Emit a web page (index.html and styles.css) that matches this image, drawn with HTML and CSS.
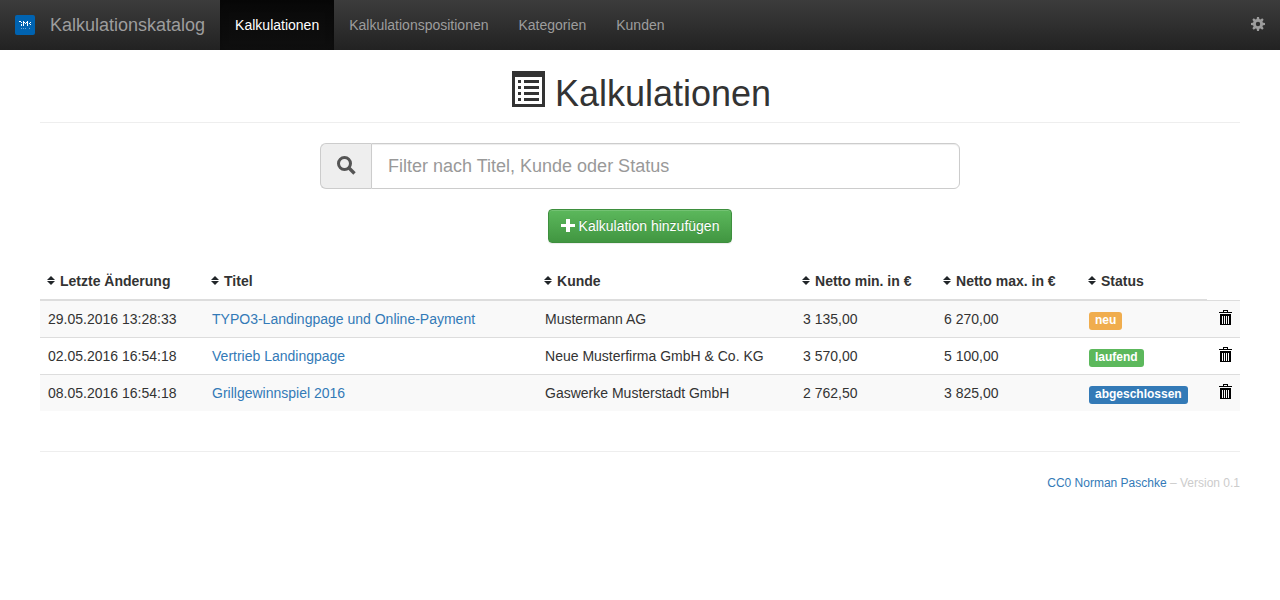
FILE: index.html
```html
<!DOCTYPE html>
<html lang="de">
<head>
<meta charset="utf-8">
<meta name="viewport" content="width=device-width, initial-scale=1">
<title>Kalkulationskatalog</title>
<link rel="stylesheet" href="styles.css">
</head>
<body>
<svg class="symbols" aria-hidden="true">
  <symbol id="sort" viewBox="0 0 8 10"><path d="M4 0l4 4H0zM4 9L0 5h8z"/></symbol>
  <symbol id="trash" viewBox="0 0 13 15"><path fill-rule="evenodd" d="M4 0h5v2h4v1H0V2h4zM5 1v1h3V1zM1 4h11v11H1zM3 6v8h1V6zM5 6v8h1V6zM7 6v8h1V6zM9 6v8h1V6z"/></symbol>
</svg>
<nav class="navbar">
  <a class="brand" href="#">
    <svg class="logo" viewBox="0 0 20 20" aria-hidden="true"><rect width="20" height="20" rx="2" fill="#0063b1"/><path fill="#fff" d="M4 6h2v1H4zM6 7h1v1H6zM8 6h1v5H8zM9 7h1v1H9zM10 8h1v1h-1zM11 7h1v1h-1zM12 6h1v5h-1zM14 8h1v1h-1zM15 7h1v1h-1zM15 9h1v1h-1zM6 9h1v2H6z"/><path fill="#6fa9d8" d="M6 13h1v1H6zM8 13h1v1H8zM10 13h1v1h-1zM14 13h1v1h-1z"/></svg>
    <span>Kalkulationskatalog</span>
  </a>
  <a class="nav-link active" href="#">Kalkulationen</a>
  <a class="nav-link" href="#">Kalkulationspositionen</a>
  <a class="nav-link" href="#">Kategorien</a>
  <a class="nav-link" href="#">Kunden</a>
  <a class="settings" href="#" aria-label="Einstellungen">
    <svg width="14" height="14" viewBox="0 0 14 14" aria-hidden="true"><g fill="#9d9d9d"><path id="cog-teeth" d="M6 0h2l.5 3h-3zM6 14h2l.5-3h-3zM0 6v2l3 .5v-3zM14 6v2l-3 .5v-3z"/><use href="#cog-teeth" transform="rotate(45 7 7)"/></g><circle cx="7" cy="7" r="3.6" fill="none" stroke="#9d9d9d" stroke-width="2.8"/></svg>
  </a>
</nav>
<main class="container">
  <header class="page-header">
    <h1>
      <svg class="title-icon" viewBox="0 0 33 36" aria-hidden="true"><path fill="#333" fill-rule="evenodd" d="M0 0h33v36H0zM3 6v27h27V6z"/><path fill="#333" d="M6 9h3v3H6zM12 9h15v3H12zM6 15h3v3H6zM12 15h15v3H12zM6 21h3v3H6zM12 21h15v3H12zM6 27h3v3H6zM12 27h15v3H12z"/></svg>
      <span>Kalkulationen</span>
    </h1>
  </header>
  <div class="filter">
    <label class="addon" for="filter" aria-label="Filter"><svg width="20" height="20" viewBox="0 0 20 20" aria-hidden="true"><circle cx="8.5" cy="8.5" r="6" fill="none" stroke="#555" stroke-width="3"/><path d="M12.5 12.5l6 6" stroke="#555" stroke-width="3.4"/></svg></label>
    <input class="filter-input" id="filter" type="text" placeholder="Filter nach Titel, Kunde oder Status">
  </div>
  <div class="actions">
    <button class="add" type="button"><svg width="14" height="14" viewBox="0 0 14 14" aria-hidden="true"><path fill="#fff" d="M5 0h4v5h5v3H9v5H5V8H0V5h5z"/></svg>Kalkulation hinzufügen</button>
  </div>
  <table class="table">
    <colgroup><col class="col-date"><col class="col-title"><col class="col-customer"><col class="col-min"><col class="col-max"><col class="col-status"><col></colgroup>
    <thead>
      <tr>
        <th><svg class="sort"><use href="#sort"/></svg>Letzte Änderung</th>
        <th><svg class="sort"><use href="#sort"/></svg>Titel</th>
        <th><svg class="sort"><use href="#sort"/></svg>Kunde</th>
        <th><svg class="sort"><use href="#sort"/></svg>Netto min. in €</th>
        <th><svg class="sort"><use href="#sort"/></svg>Netto max. in €</th>
        <th><svg class="sort"><use href="#sort"/></svg>Status</th>
        <td></td>
      </tr>
    </thead>
    <tbody>
      <tr>
        <td>29.05.2016 13:28:33</td><td><a href="#">TYPO3-Landingpage und Online-Payment</a></td><td>Mustermann AG</td><td>3 135,00</td><td>6 270,00</td>
        <td><span class="label warning">neu</span></td>
        <td><button class="delete" type="button" aria-label="Löschen"><svg class="trash"><use href="#trash"/></svg></button></td>
      </tr>
      <tr>
        <td>02.05.2016 16:54:18</td><td><a href="#">Vertrieb Landingpage</a></td><td>Neue Musterfirma GmbH &amp; Co. KG</td><td>3 570,00</td><td>5 100,00</td>
        <td><span class="label success">laufend</span></td>
        <td><button class="delete" type="button" aria-label="Löschen"><svg class="trash"><use href="#trash"/></svg></button></td>
      </tr>
      <tr>
        <td>08.05.2016 16:54:18</td><td><a href="#">Grillgewinnspiel 2016</a></td><td>Gaswerke Musterstadt GmbH</td><td>2 762,50</td><td>3 825,00</td>
        <td><span class="label primary">abgeschlossen</span></td>
        <td><button class="delete" type="button" aria-label="Löschen"><svg class="trash"><use href="#trash"/></svg></button></td>
      </tr>
    </tbody>
  </table>
  <footer class="footer"><a href="#">CC0 Norman Paschke</a> – Version 0.1</footer>
</main>
</body>
</html>
```
FILE: styles.css
```css
* { box-sizing: border-box; }
body {
  margin: 0;
  font: 14px/20px "Liberation Sans", Arial, sans-serif;
  color: #333;
  background: #fff;
}
a { color: #337ab7; text-decoration: none; }
.symbols { display: none; }

.navbar {
  display: flex;
  height: 50px;
  background: linear-gradient(#3c3c3c, #222);
}
.brand {
  display: flex;
  align-items: center;
  gap: 15px;
  padding: 0 15px;
  font-size: 18px;
  color: #9d9d9d;
}
.logo { width: 20px; height: 20px; }
.nav-link { padding: 15px; color: #9d9d9d; }
.nav-link.active {
  color: #fff;
  background: linear-gradient(#080808, #0f0f0f);
  box-shadow: inset 0 3px 9px rgba(0, 0, 0, .25);
}
.settings { margin-left: auto; padding: 17px 15px; }
.settings svg { display: block; }

.container { padding: 0 40px; }
.page-header {
  margin: 24px 0 20px;
  padding-bottom: 8px;
  border-bottom: 1px solid #eee;
}
h1 {
  display: flex;
  justify-content: center;
  gap: 10px;
  margin: 0;
  padding-left: 3px;
  font-size: 36px;
  line-height: 40px;
  font-weight: 500;
}
.title-icon { width: 33px; height: 36px; margin-top: -3px; }

.filter {
  display: flex;
  width: 640px;
  max-width: 100%;
  height: 46px;
  margin: 0 auto 20px;
}
.addon {
  display: flex;
  align-items: center;
  padding: 0 15px 3px;
  border: 1px solid #ccc;
  border-right: 0;
  border-radius: 6px 0 0 6px;
  background: #eee;
}
.filter-input {
  flex: 1;
  min-width: 0;
  padding: 10px 16px;
  border: 1px solid #ccc;
  border-radius: 0 6px 6px 0;
  box-shadow: inset 0 1px 1px rgba(0, 0, 0, .075);
  font: inherit;
  font-size: 18px;
  color: #555;
}
.filter-input::placeholder { color: #999; opacity: 1; }

.actions { display: flex; justify-content: center; margin-bottom: 20px; }
.add {
  display: flex;
  align-items: center;
  gap: 4px;
  padding: 6px 12px;
  border: 1px solid #3e8f3e;
  border-radius: 4px;
  background: linear-gradient(#5cb85c, #419641);
  box-shadow: inset 0 1px 0 rgba(255, 255, 255, .15), 0 1px 1px rgba(0, 0, 0, .075);
  font: inherit;
  color: #fff;
  text-shadow: 0 -1px 0 rgba(0, 0, 0, .2);
}

.table {
  width: 100%;
  table-layout: fixed;
  border-collapse: collapse;
  margin-bottom: 40px;
}
.col-date { width: 13.67%; }
.col-title { width: 27.75%; }
.col-customer { width: 21.5%; }
.col-min { width: 11.75%; }
.col-max { width: 12.08%; }
.col-status { width: 10.5%; }
.table th, .table td { padding: 8px; text-align: left; white-space: nowrap; }
.table th { padding-left: 7px; border-bottom: 2px solid #ddd; }
.table tbody td { border-top: 1px solid #ddd; }
.table tbody tr:nth-child(odd) { background: #f9f9f9; }
.sort { width: 8px; height: 10px; margin-right: 5px; fill: #212529; }
.label {
  display: block;
  width: fit-content;
  height: 18px;
  margin: 3px 0 -1px;
  padding: 0 6px;
  border-radius: 3px;
  font-size: 12px;
  font-weight: 700;
  line-height: 17px;
  color: #fff;
}
.warning { background: #f0ad4e; }
.success { background: #5cb85c; }
.primary { background: #337ab7; }
.delete { display: block; height: 20px; margin-left: auto; padding: 0; border: 0; background: none; }
.trash { display: block; width: 13px; height: 15px; margin-bottom: 3px; fill: #000; }

.footer {
  padding-top: 21px;
  border-top: 1px solid #eee;
  font-size: 12px;
  text-align: right;
  color: #ccc;
}
```
